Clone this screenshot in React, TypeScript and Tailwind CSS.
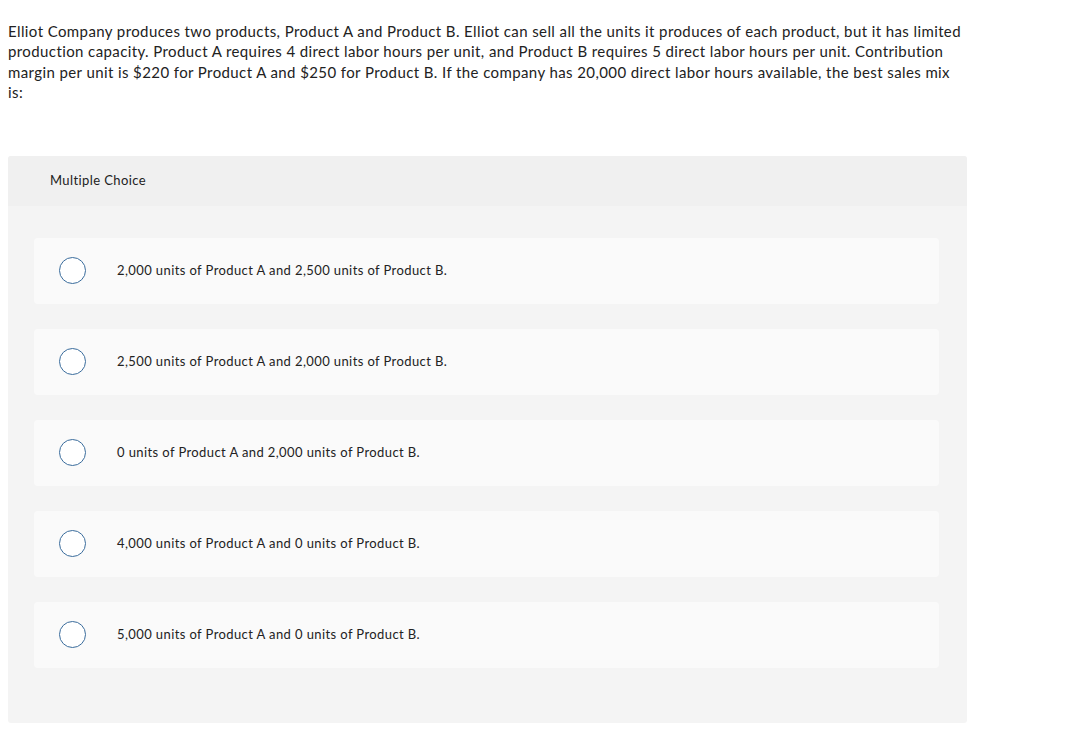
const choices = [
  '2,000 units of Product A and 2,500 units of Product B.',
  '2,500 units of Product A and 2,000 units of Product B.',
  '0 units of Product A and 2,000 units of Product B.',
  '4,000 units of Product A and 0 units of Product B.',
  '5,000 units of Product A and 0 units of Product B.',
];

export default function App() {
  return (
    <div className="min-h-[755px] bg-white text-[#222222] font-['Lato',sans-serif] tracking-[0.4px]">
      {/* Question */}
      <div className="pl-2 pt-[21px] w-[963px]">
        <p className="text-[15px] leading-[20.4px]">
          Elliot Company produces two products, Product A and Product B. Elliot can sell all the units it produces of each product, but it has limited production capacity. Product A requires 4 direct labor hours per unit, and Product B requires 5 direct labor hours per unit. Contribution margin per unit is $220 for Product A and $250 for Product B. If the company has 20,000 direct labor hours available, the best sales mix is:
        </p>
      </div>

      {/* Answer panel */}
      <div className="ml-2 mt-[53px] w-[959px] rounded-[3px] bg-[#f4f4f4] overflow-hidden">
        <div className="h-[50px] bg-[#f0f0f0] flex items-center pl-[42px]">
          <span className="text-[13px]">Multiple Choice</span>
        </div>
        <div className="pt-8 pb-[55px] pl-[26px] pr-[28px] flex flex-col gap-[25px]">
          {choices.map((c) => (
            <label key={c} className="h-[66px] rounded-[4px] bg-[#fafafa] flex items-center pl-[25px]">
              <span className="w-[27px] h-[27px] rounded-full border border-[#3a6c9c] bg-white shrink-0" />
              <span className="ml-[31px] text-[13px]">{c}</span>
            </label>
          ))}
        </div>
      </div>
    </div>
  );
}
